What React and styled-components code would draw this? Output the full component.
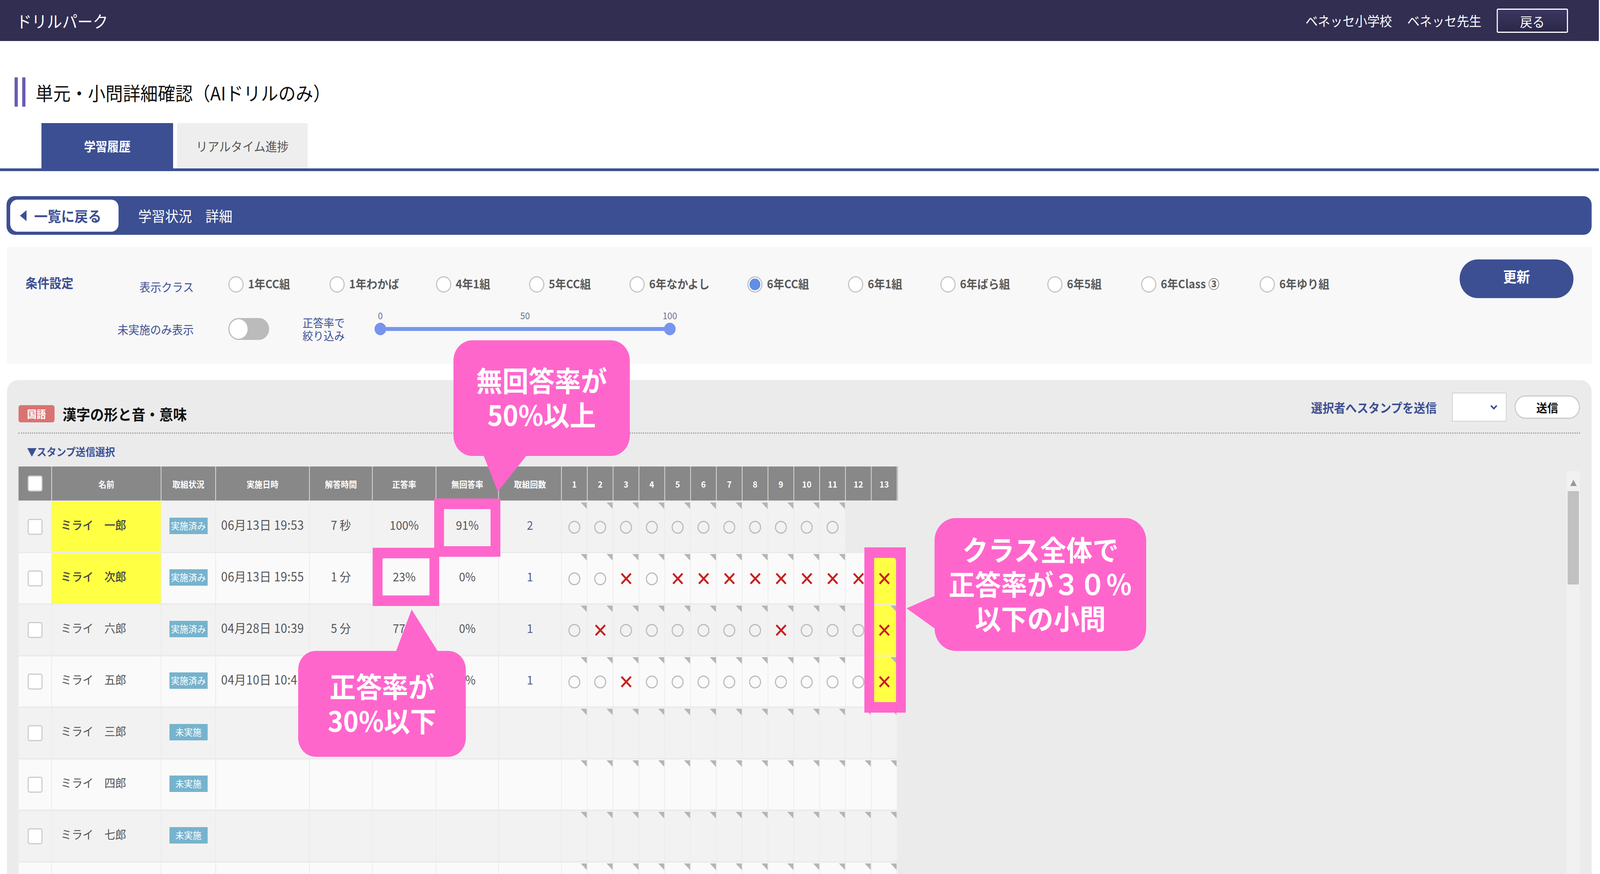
import React from 'react'
import styled, { createGlobalStyle } from 'styled-components'

const navy = '#3c4f92'
const pink = '#ff66cc'
const designWidth = 4400

const GlobalStyle = createGlobalStyle`
  html, body {
    margin: 0;
    padding: 0;
    background: #fff;
    overflow: hidden;
    font-family: "Noto Sans CJK JP", "Noto Sans", sans-serif;
  }
  * { box-sizing: border-box; }
`

const classes = [
  { name: '1年CC組', width: 278 },
  { name: '1年わかば', width: 293 },
  { name: '4年1組', width: 256 },
  { name: '5年CC組', width: 276 },
  { name: '6年なかよし', width: 324 },
  { name: '6年CC組', width: 277, checked: true },
  { name: '6年1組', width: 254 },
  { name: '6年ばら組', width: 294 },
  { name: '6年5組', width: 258 },
  { name: '6年Class ③', width: 326 },
  { name: '6年ゆり組', width: 200 },
]

const headers = ['名前', '取組状況', '実施日時', '解答時間', '正答率', '無回答率', '取組回数']
const questionNos = Array.from({ length: 13 }, (_, i) => i + 1)

const o = 'o'
const x = 'x'
const rows = [
  { name: 'ミライ　一郎', mark: true, status: '実施済み', date: '06月13日 19:53', time: '7 秒', rate: '100%', none: '91%', count: '2', answers: [o, o, o, o, o, o, o, o, o, o, o] },
  { name: 'ミライ　次郎', mark: true, status: '実施済み', date: '06月13日 19:55', time: '1 分', rate: '23%', none: '0%', count: '1', answers: [o, o, x, o, x, x, x, x, x, x, x, x, x] },
  { name: 'ミライ　六郎', status: '実施済み', date: '04月28日 10:39', time: '5 分', rate: '77%', none: '0%', count: '1', answers: [o, x, o, o, o, o, o, o, x, o, o, o, x] },
  { name: 'ミライ　五郎', status: '実施済み', date: '04月10日 10:41', time: '3 分', rate: '85%', none: '0%', count: '1', answers: [o, o, x, o, o, o, o, o, o, o, o, o, x] },
  { name: 'ミライ　三郎', status: '未実施', answers: Array(13).fill('') },
  { name: 'ミライ　四郎', status: '未実施', answers: Array(13).fill('') },
  { name: 'ミライ　七郎', status: '未実施', answers: Array(13).fill('') },
  { name: '', answers: Array(13).fill('') },
]

export default function App() {
  // the browser window can be narrower than the design, squeeze to fit
  const squeeze = window.innerWidth / designWidth
  return (
    <Page style={{ transform: `scaleX(${squeeze})` }}>
      <GlobalStyle />
      <Header>
        <Logo>ドリルパーク</Logo>
        <HeaderRight>
          <span>ベネッセ小学校</span>
          <span>ベネッセ先生</span>
          <ReturnButton>戻る</ReturnButton>
        </HeaderRight>
      </Header>

      <TitleRow>
        <TitleBars />
        <Title>単元・小問詳細確認（AIドリルのみ）</Title>
      </TitleRow>

      <Tabs>
        <Tab $active>学習履歴</Tab>
        <Tab $wide={359}>リアルタイム進捗</Tab>
      </Tabs>

      <BlueBar>
        <BackButton>
          <svg width="18" height="28" viewBox="0 0 18 28">
            <polygon points="18,0 0,14 18,28" fill={navy} />
          </svg>
          一覧に戻る
        </BackButton>
        <BarTitle>学習状況　詳細</BarTitle>
      </BlueBar>

      <Conditions>
        <ClassRow>
          <ClassGroup>
            <LabelColumn>
              <SectionLabel>条件設定</SectionLabel>
              <FieldLabel $shift>表示クラス</FieldLabel>
            </LabelColumn>
            <RadioList>
              {classes.map((c) => (
                <RadioItem key={c.name} $width={c.width}>
                  <Radio $checked={c.checked} />
                  <RadioText>{c.name}</RadioText>
                </RadioItem>
              ))}
            </RadioList>
          </ClassGroup>
          <UpdateButton>更新</UpdateButton>
        </ClassRow>
        <FilterRow>
          <LabelColumn $end>
            <FieldLabel>未実施のみ表示</FieldLabel>
          </LabelColumn>
          <Toggle />
          <RangeLabel>正答率で<br />絞り込み</RangeLabel>
          <Slider>
            <Scale>
              <ScaleMark>0</ScaleMark>
              <ScaleMark>50</ScaleMark>
              <ScaleMark>100</ScaleMark>
            </Scale>
            <Track>
              <Thumb />
              <Thumb />
            </Track>
          </Slider>
        </FilterRow>
      </Conditions>

      <MainPanel>
        <PanelHead>
          <SubjectGroup>
            <SubjectBadge>国語</SubjectBadge>
            <SubjectTitle>漢字の形と音・意味</SubjectTitle>
          </SubjectGroup>
          <StampGroup>
            <StampLabel>選択者へスタンプを送信</StampLabel>
            <StampSelect>
              <svg width="22" height="14" viewBox="0 0 22 14">
                <polyline points="3,3 11,11 19,3" fill="none" stroke={navy} strokeWidth="4" />
              </svg>
            </StampSelect>
            <SendButton>送信</SendButton>
          </StampGroup>
        </PanelHead>
        <StampToggle>▼スタンプ送信選択</StampToggle>

        <TableArea>
          <Table>
            <HeadRow>
              <HeadCell><Checkbox /></HeadCell>
              {headers.map((h) => <HeadCell key={h}>{h}</HeadCell>)}
              {questionNos.map((n) => <HeadCell key={n}>{n}</HeadCell>)}
            </HeadRow>
            {rows.map((r, i) => (
              <BodyRow key={i}>
                <Cell $alt={i % 2 === 1}>{r.name && <Checkbox />}</Cell>
                <NameCell $alt={i % 2 === 1} $mark={r.mark}>{r.name}</NameCell>
                <Cell $alt={i % 2 === 1}>{r.status && <StatusBadge>{r.status}</StatusBadge>}</Cell>
                <DateCell $alt={i % 2 === 1}>{r.date}</DateCell>
                <TextCell $alt={i % 2 === 1}>{r.time}</TextCell>
                <TextCell $alt={i % 2 === 1}>{r.rate}</TextCell>
                <TextCell $alt={i % 2 === 1}>{r.none}</TextCell>
                <CountCell $alt={i % 2 === 1}>{r.count}</CountCell>
                {r.answers.map((a, j) => (
                  <QuestionCell key={j} $alt={i % 2 === 1} $mark={j === 12 && i >= 1 && i <= 3}>
                    {a === o && <Circle />}
                    {a === x && (
                      <svg width="30" height="30" viewBox="0 0 30 30">
                        <path d="M2 2 L28 28 M28 2 L2 28" stroke="#c5211f" strokeWidth="5" />
                      </svg>
                    )}
                  </QuestionCell>
                ))}
              </BodyRow>
            ))}
          </Table>
          <Scrollbar>
            <ScrollArrow />
            <ScrollThumb />
          </Scrollbar>
        </TableArea>
      </MainPanel>

      <HighlightBox $x={1194} $y={1276} $w={182} $h={149} />
      <HighlightBox $x={1025} $y={1402} $w={183} $h={149} />
      <HighlightBox $x={2377} $y={1401} $w={114} $h={423} />

      <NoAnswerCallout>無回答率が<br />50%以上</NoAnswerCallout>
      <CorrectCallout>正答率が<br />30%以下</CorrectCallout>
      <ClassCallout>クラス全体で<br />正答率が３０％<br />以下の小問</ClassCallout>
    </Page>
  )
}

const Page = styled.div`
  position: relative;
  width: 4397px;
  height: 2237px;
  overflow: hidden;
  background: #fff;
  transform-origin: 0 0;
`

const Header = styled.header`
  display: flex;
  align-items: center;
  justify-content: space-between;
  height: 105px;
  padding: 0 85px 0 45px;
  background: #312e52;
  color: #fff;
`

const Logo = styled.div`
  font-size: 42px;
`

const HeaderRight = styled.div`
  display: flex;
  align-items: center;
  gap: 42px;
  font-size: 34px;
`

const ReturnButton = styled.button`
  width: 196px;
  height: 62px;
  border: 3px solid #fff;
  border-radius: 4px;
  background: linear-gradient(#3a3760, #2a2748);
  color: #fff;
  font: inherit;
  padding: 4px 0 0;
`

const TitleRow = styled.div`
  display: flex;
  align-items: center;
  gap: 28px;
  height: 75px;
  margin-top: 93px;
  padding-left: 40px;
`

const TitleBars = styled.div`
  width: 30px;
  height: 100%;
  border-left: 9px solid #6a5cb4;
  border-right: 9px solid #6a5cb4;
`

const Title = styled.h1`
  margin: 0;
  font-size: 48px;
  font-weight: 400;
  color: #111;
`

const Tabs = styled.div`
  display: flex;
  gap: 11px;
  margin-top: 42px;
  padding-left: 114px;
  border-bottom: 7px solid ${navy};
`

const Tab = styled.div`
  display: flex;
  align-items: center;
  justify-content: center;
  width: ${(p) => p.$wide || 362}px;
  height: 116px;
  font-size: 32px;
  font-weight: ${(p) => (p.$active ? 700 : 400)};
  color: ${(p) => (p.$active ? '#fff' : '#555')};
  background: ${(p) => (p.$active ? navy : '#eee')};
`

const BlueBar = styled.div`
  display: flex;
  align-items: center;
  gap: 54px;
  height: 99px;
  margin: 64px 20px 0 18px;
  padding-left: 10px;
  border-radius: 22px;
  background: ${navy};
`

const BackButton = styled.button`
  display: flex;
  align-items: center;
  gap: 21px;
  width: 298px;
  height: 82px;
  padding: 0 0 0 27px;
  border: 0;
  border-radius: 20px;
  background: #fff;
  color: ${navy};
  font: inherit;
  font-size: 37px;
  font-weight: 700;
  white-space: nowrap;
`

const BarTitle = styled.div`
  font-size: 37px;
  color: #fff;
`

const Conditions = styled.section`
  height: 299px;
  margin: 31px 19px 0 19px;
  padding: 32px 51px 0;
  background: #f8f8f8;
`

const ClassRow = styled.div`
  display: flex;
  align-items: flex-start;
  justify-content: space-between;
  height: 99px;
`

const ClassGroup = styled.div`
  display: flex;
  align-items: center;
  height: 99px;
  padding-top: 28px;
`

const LabelColumn = styled.div`
  display: flex;
  align-items: center;
  justify-content: ${(p) => (p.$end ? 'flex-end' : 'space-between')};
  width: 463px;
  margin-right: 95px;
  flex: none;
`

const SectionLabel = styled.div`
  margin-bottom: 10px;
  font-size: 33px;
  font-weight: 700;
  color: ${navy};
`

const FieldLabel = styled.div`
  margin-top: ${(p) => (p.$shift ? '10px' : '0')};
  font-size: 30px;
  color: ${navy};
  white-space: nowrap;
`

const RadioList = styled.div`
  display: flex;
  align-items: center;
`

const RadioItem = styled.label`
  display: flex;
  align-items: center;
  gap: 12px;
  width: ${(p) => p.$width}px;
  flex: none;
`

const Radio = styled.span`
  display: block;
  width: 42px;
  height: 42px;
  border: 3px solid #c4c4c4;
  border-radius: 50%;
  background: ${(p) => (p.$checked ? '#5f8fe6' : '#fff')};
  box-shadow: ${(p) => (p.$checked ? 'inset 0 0 0 3px #fff' : 'none')};
`

const RadioText = styled.span`
  margin-bottom: 6px;
  font-size: 30px;
  font-weight: 700;
  color: #5a5a5a;
  white-space: nowrap;
`

const UpdateButton = styled.button`
  width: 313px;
  height: 99px;
  padding: 0 0 14px;
  border: 0;
  border-radius: 50px;
  background: ${navy};
  color: #fff;
  font: inherit;
  font-size: 37px;
  font-weight: 700;
`

const FilterRow = styled.div`
  display: flex;
  align-items: center;
  height: 56px;
  margin-top: 51px;
`

const Toggle = styled.div`
  flex: none;
  width: 112px;
  height: 56px;
  margin-right: 92px;
  border: 3px solid #bbb;
  border-radius: 28px;
  background: #bbb;
  &::before {
    content: '';
    display: block;
    width: 50px;
    height: 50px;
    border-radius: 50%;
    background: #fff;
  }
`

const RangeLabel = styled.div`
  flex: none;
  width: 118px;
  margin-right: 80px;
  font-size: 29px;
  line-height: 33px;
  color: ${navy};
  white-space: nowrap;
`

const Slider = styled.div`
  align-self: flex-start;
  width: 828px;
  margin-top: -22px;
`

const Scale = styled.div`
  display: flex;
  justify-content: space-between;
  height: 34px;
  padding: 0 16px;
`

const ScaleMark = styled.span`
  display: flex;
  justify-content: center;
  width: 0;
  font-size: 24px;
  line-height: 30px;
  color: #6a7390;
`

const Track = styled.div`
  position: relative;
  display: flex;
  align-items: center;
  justify-content: space-between;
  height: 32px;
  &::before {
    content: '';
    position: absolute;
    left: 16px;
    right: 16px;
    top: 11px;
    height: 10px;
    background: #7795ee;
  }
`

const Thumb = styled.span`
  position: relative;
  display: block;
  width: 32px;
  height: 32px;
  border-radius: 50%;
  background: #7795ee;
`

const MainPanel = styled.section`
  height: 1264px;
  margin: 42px 20px 0 19px;
  padding: 0 32px;
  border-radius: 30px 30px 0 0;
  background: #ebebeb;
  overflow: hidden;
`

const PanelHead = styled.div`
  display: flex;
  align-items: flex-start;
  justify-content: space-between;
  height: 137px;
  padding-top: 32px;
  border-bottom: 3px dotted #999;
`

const SubjectGroup = styled.div`
  display: flex;
  align-items: center;
  gap: 22px;
  margin-top: 26px;
`

const SubjectBadge = styled.span`
  width: 99px;
  height: 44px;
  border-radius: 6px;
  background: #d97372;
  color: #fff;
  font-size: 26px;
  font-weight: 700;
  line-height: 43px;
  text-align: center;
`

const SubjectTitle = styled.h2`
  margin: 0;
  font-size: 38px;
  font-weight: 700;
  color: #111;
`

const StampGroup = styled.div`
  display: flex;
  align-items: center;
  height: 74px;
`

const StampLabel = styled.span`
  margin-right: 42px;
  font-size: 31.5px;
  font-weight: 700;
  color: ${navy};
  white-space: nowrap;
`

const StampSelect = styled.div`
  display: flex;
  align-items: center;
  justify-content: flex-end;
  width: 150px;
  height: 74px;
  margin-right: 22px;
  padding-right: 22px;
  border: 2px solid #d0d0d0;
  background: #fff;
`

const SendButton = styled.button`
  width: 180px;
  height: 60px;
  padding: 0;
  border: 3px solid #ccc;
  border-radius: 30px;
  background: #fff;
  color: #111;
  font: inherit;
  font-size: 30px;
  font-weight: 700;
`

const StampToggle = styled.div`
  height: 36px;
  margin-top: 28px;
  padding-left: 23px;
  font-size: 27px;
  font-weight: 700;
  line-height: 36px;
  color: ${navy};
`

const TableArea = styled.div`
  display: flex;
  align-items: flex-start;
  justify-content: space-between;
  margin-top: 20px;
`

const Table = styled.div`
  display: flex;
  flex-direction: column;
  gap: 4px;
  width: 2418px;
`

const columns = '92px 301px 150px 258px 173px 175px 172px 173px repeat(13, 71px)'

const HeadRow = styled.div`
  display: grid;
  grid-template-columns: ${columns};
  height: 87px;
  margin-bottom: -1px;
  background: #888;
`

const HeadCell = styled.div`
  display: flex;
  align-items: center;
  justify-content: center;
  border-right: 2px solid #dcdcdc;
  color: #fff;
  font-size: 22px;
  font-weight: 700;
`

const BodyRow = styled.div`
  display: grid;
  grid-template-columns: ${columns};
  height: 128px;
`

const Cell = styled.div`
  display: flex;
  align-items: center;
  justify-content: center;
  border-right: 2px solid #ebebeb;
  background: ${(p) => (p.$alt ? '#fafafa' : '#f2f2f2')};
`

const TextCell = styled(Cell)`
  padding-bottom: 12px;
  font-size: 31px;
  color: #555;
  white-space: nowrap;
`

const DateCell = styled(TextCell)`
  font-size: 32px;
  letter-spacing: 0.5px;
`

const CountCell = styled(TextCell)`
  color: #55608a;
`

const NameCell = styled(TextCell)`
  justify-content: flex-start;
  padding-left: 24px;
  background: ${(p) => (p.$mark ? '#ffff44' : p.$alt ? '#fafafa' : '#f2f2f2')};
  font-size: 30px;
  font-weight: ${(p) => (p.$mark ? 500 : 400)};
  color: ${(p) => (p.$mark ? '#444' : '#555')};
`

const QuestionCell = styled(Cell)`
  position: relative;
  padding-top: 2px;
  background: ${(p) => (p.$mark ? '#ffff44' : p.$alt ? '#fafafa' : '#f2f2f2')};
  &::after {
    content: '';
    position: absolute;
    top: 2px;
    right: 0;
    width: 17px;
    height: 17px;
    background: #b5b5b5;
    clip-path: polygon(0 0, 100% 0, 100% 100%);
  }
`

const Checkbox = styled.span`
  display: block;
  width: 41px;
  height: 41px;
  border: 3px solid #ccc;
  border-radius: 6px;
  background: #fff;
`

const StatusBadge = styled.span`
  display: block;
  width: 105px;
  height: 42px;
  margin-bottom: 4px;
  background: #76b3cd;
  color: #fff;
  font-size: 24px;
  line-height: 40px;
  text-align: center;
  white-space: nowrap;
`

const Circle = styled.span`
  display: block;
  width: 33px;
  height: 33px;
  border: 3px solid #bbb;
  border-radius: 50%;
`

const Scrollbar = styled.div`
  display: flex;
  flex-direction: column;
  align-items: center;
  width: 37px;
  height: 1040px;
  margin-top: 12px;
  background: #f1f1f1;
`

const ScrollArrow = styled.div`
  width: 0;
  height: 0;
  margin: 22px 0 13px;
  border-left: 9px solid transparent;
  border-right: 9px solid transparent;
  border-bottom: 16px solid #999;
`

const ScrollThumb = styled.div`
  width: 31px;
  height: 239px;
  background: #c1c1c1;
`

const HighlightBox = styled.div`
  position: absolute;
  left: ${(p) => p.$x}px;
  top: ${(p) => p.$y}px;
  width: ${(p) => p.$w}px;
  height: ${(p) => p.$h}px;
  border: 27px solid ${pink};
`

const Callout = styled.div`
  position: absolute;
  display: flex;
  align-items: center;
  justify-content: center;
  padding-bottom: 8px;
  background: ${pink};
  color: #fff;
  font-size: 72px;
  font-weight: 700;
  line-height: 88px;
  text-align: center;
  white-space: nowrap;
  &::after {
    content: '';
    position: absolute;
    background: ${pink};
  }
`

const NoAnswerCallout = styled(Callout)`
  left: 1247px;
  top: 871px;
  width: 485px;
  height: 296px;
  border-radius: 52px;
  &::after {
    left: 83px;
    top: 295px;
    width: 118px;
    height: 92px;
    clip-path: polygon(0 0, 100% 0, 33% 100%);
  }
`

const CorrectCallout = styled(Callout)`
  left: 820px;
  top: 1666px;
  width: 461px;
  height: 271px;
  border-radius: 48px;
  &::after {
    left: 269px;
    top: -106px;
    width: 115px;
    height: 107px;
    clip-path: polygon(37.4% 0, 100% 100%, 0 100%);
  }
`

const ClassCallout = styled(Callout)`
  left: 2570px;
  top: 1326px;
  width: 582px;
  height: 340px;
  border-radius: 58px;
  &::after {
    left: -77px;
    top: 199px;
    width: 78px;
    height: 84px;
    clip-path: polygon(0 38%, 100% 0, 100% 100%);
  }
`
